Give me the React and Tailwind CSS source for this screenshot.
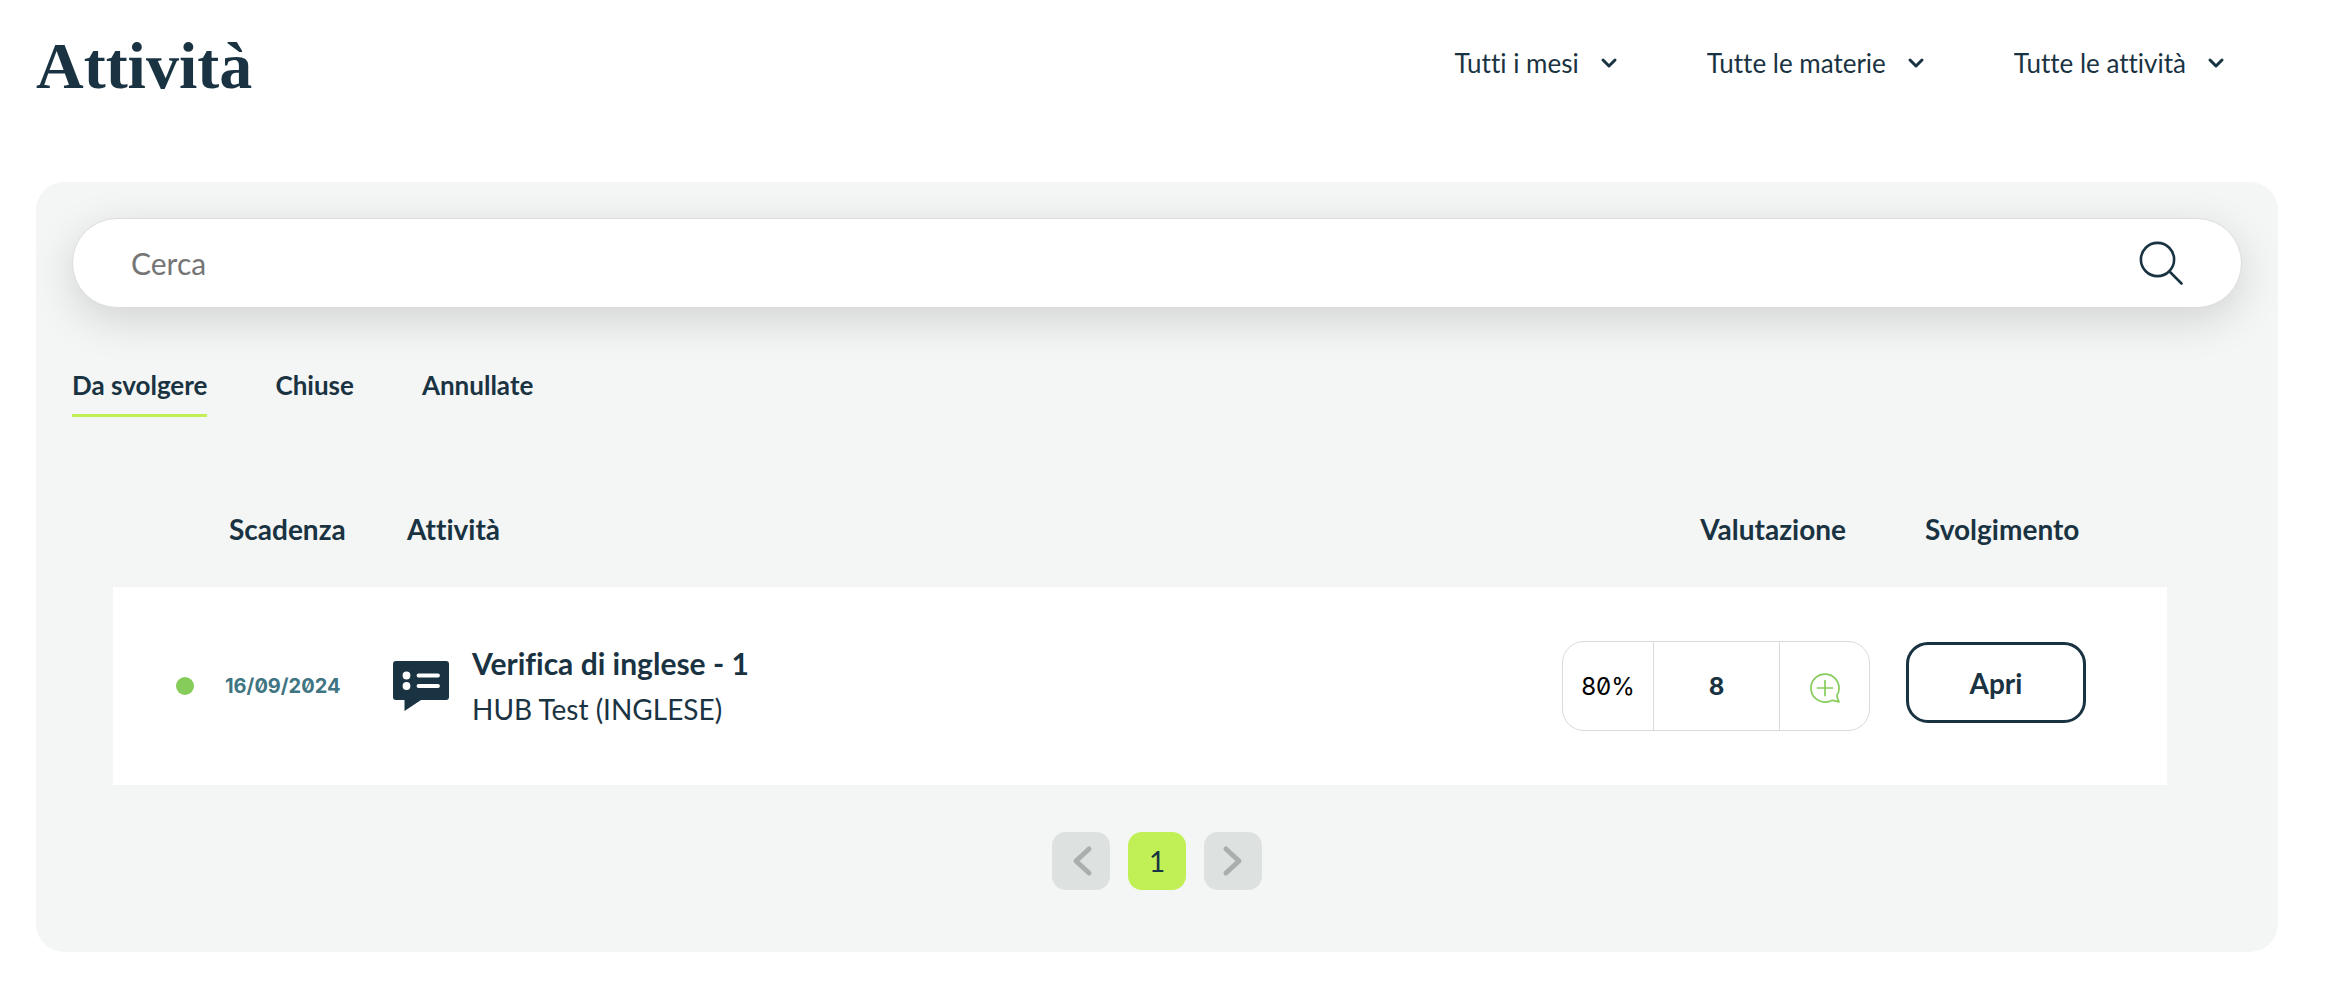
import { useState } from 'react';
import { ChevronDown } from 'lucide-react';

const filters = [
  { id: 'mesi', label: 'Tutti i mesi' },
  { id: 'materie', label: 'Tutte le materie' },
  { id: 'attivita', label: 'Tutte le attività' },
];

const tabs = ['Da svolgere', 'Chiuse', 'Annullate'];

const activities = [
  {
    id: 1,
    date: '16/09/2024',
    title: 'Verifica di inglese - 1',
    subtitle: 'HUB Test (INGLESE)',
    percent: '80%',
    grade: '8',
  },
];

function SearchIcon() {
  return (
    <svg className="w-11 h-11" viewBox="0 0 44 44" fill="none" stroke="currentColor" strokeWidth="2.6" strokeLinecap="round" aria-hidden="true">
      <circle cx="18.5" cy="18.5" r="16.6" />
      <path d="M30.5 30.5 42.5 42.5" />
    </svg>
  );
}

function TestIcon() {
  return (
    <svg className="w-14 h-[50px] shrink-0" viewBox="0 0 56 50" aria-hidden="true">
      <path d="M3 0h50a3 3 0 0 1 3 3v33a3 3 0 0 1-3 3H28L11.5 50V39H3a3 3 0 0 1-3-3V3a3 3 0 0 1 3-3Z" fill="#1a3342" />
      <circle cx="13.5" cy="14.5" r="3.9" fill="#fff" />
      <circle cx="13.5" cy="25" r="3.9" fill="#fff" />
      <path d="M25.5 14.5h19.5M25.5 25h19.5" stroke="#fff" strokeWidth="3.8" strokeLinecap="round" />
    </svg>
  );
}

function CommentIcon() {
  return (
    <svg className="w-[30px] h-[30px]" viewBox="0 0 30 30" fill="none" stroke="#86cc5a" strokeWidth="1.7" strokeLinecap="round" strokeLinejoin="round" aria-hidden="true">
      <path d="M27 22.3A14 14 0 1 0 21.5 27.5C23.5 27.1 26.5 28.3 29 28.9C28.6 26.8 26.6 25 27 22.3Z" />
      <path d="M15 7.5v15M7.5 15h15" />
    </svg>
  );
}

function Arrow({ d }) {
  return (
    <svg className="w-[58px] h-[58px]" viewBox="0 0 58 58" fill="none" stroke="#aaafae" strokeWidth="5" strokeLinecap="round" strokeLinejoin="round" aria-hidden="true">
      <path d={d} />
    </svg>
  );
}

export default function App() {
  const [activeTab, setActiveTab] = useState('Da svolgere');
  const [query, setQuery] = useState('');

  return (
    <main className="min-h-screen bg-white pl-9 pr-14 pb-11 font-[Lato,sans-serif] text-[#1a3342] [font-variant-ligatures:none]">
      {/* Header */}
      <header className="flex h-[182px] items-start justify-between pt-7 pr-[50px]">
        <h1 className="font-['Liberation_Serif',serif] text-[66px] leading-[76px] font-bold">Attività</h1>
        <div className="flex gap-[86px] pt-3">
          {filters.map((filter) => (
            <div key={filter.id} className="flex items-center gap-[18px]">
              <select
                id={filter.id}
                aria-label={filter.label}
                className="appearance-none field-sizing-content bg-transparent text-[26px] leading-[46px] cursor-pointer [font-variant-ligatures:none]"
              >
                <option>{filter.label}</option>
              </select>
              <ChevronDown className="w-6 h-6 pointer-events-none" strokeWidth={3} />
            </div>
          ))}
        </div>
      </header>

      <section className="rounded-[28px] bg-[#f4f6f5] px-9 pt-9 pb-[62px]">
        {/* Search */}
        <form
          onSubmit={(e) => e.preventDefault()}
          className="flex h-[90px] items-center rounded-[45px] border border-[#dcdedd] bg-white pl-[58px] pr-[58px] shadow-[0_12px_44px_rgba(0,0,0,0.14)]"
        >
          <input
            type="text"
            aria-label="Cerca"
            placeholder="Cerca"
            value={query}
            onChange={(e) => setQuery(e.target.value)}
            className="min-w-0 flex-1 bg-transparent text-[30px] outline-none placeholder:text-[#757575]"
          />
          <button type="submit" aria-label="Avvia ricerca">
            <SearchIcon />
          </button>
        </form>

        {/* Tabs */}
        <div className="mt-14 flex gap-[68px]">
          {tabs.map((tab) => (
            <button
              key={tab}
              type="button"
              onClick={() => setActiveTab(tab)}
              className={`border-b-[3px] pb-2 text-[26px] leading-[42px] font-bold ${
                activeTab === tab ? 'border-[#c1f056]' : 'border-transparent'
              }`}
            >
              {tab}
            </button>
          ))}
        </div>

        {/* Activities */}
        <div className="mt-14 pl-[41px] pr-[75px]">
          <table className="w-full table-fixed text-left">
            <thead>
              <tr className="h-[114px] text-[28px] [&>th]:pb-0.5">
                <td className="w-[92px]" />
                <th className="w-[168px] pl-6">Scadenza</th>
                <th className="pl-[34px]">Attività</th>
                <th className="w-[344px] pr-[60px] text-right">Valutazione</th>
                <th className="w-[261px] pl-[19px]">Svolgimento</th>
              </tr>
            </thead>
            <tbody>
              {activities.map((activity) => (
                <tr key={activity.id} className="h-[198px] bg-white">
                  <td className="pl-[63px]">
                    <div className="h-[18px] w-[18px] rounded-full bg-[#86cc5a]" />
                  </td>
                  <td className="pl-5 font-[Inter,sans-serif] text-[20px] font-bold slashed-zero text-[#3f7582]">{activity.date}</td>
                  <td className="pl-5">
                    <div className="flex items-center gap-[23px]">
                      <TestIcon />
                      <div>
                        <p className="text-[30px] leading-[46px] font-bold">{activity.title}</p>
                        <p className="text-[28px] leading-[46px]">{activity.subtitle}</p>
                      </div>
                    </div>
                  </td>
                  <td>
                    <div className="flex h-[90px] w-[308px] rounded-[22px] border border-[#d9dbda] font-[Inter,sans-serif]">
                      <span className="flex w-[90px] items-center justify-center pt-0.5 text-[24px] slashed-zero text-black">{activity.percent}</span>
                      <span className="flex w-[127px] items-center justify-center border-x border-[#d9dbda] pt-0.5 text-[24px] font-bold">{activity.grade}</span>
                      <button type="button" aria-label="Aggiungi commento" className="flex flex-1 items-center justify-center pt-1">
                        <CommentIcon />
                      </button>
                    </div>
                  </td>
                  <td className="pb-2">
                    <button type="button" className="h-[81px] w-[180px] rounded-[22px] border-[3px] border-[#1a3342] pt-0.5 text-[28px] font-bold">
                      Apri
                    </button>
                  </td>
                </tr>
              ))}
            </tbody>
          </table>
        </div>

        {/* Pagination */}
        <nav aria-label="Pagine" className="mt-[47px] flex justify-center gap-[18px]">
          <button type="button" disabled aria-label="Pagina precedente" className="h-[58px] w-[58px] rounded-[14px] bg-[#dde1e0]">
            <Arrow d="M37 17 24 29l13 12" />
          </button>
          <button type="button" aria-current="page" className="h-[58px] w-[58px] rounded-[14px] bg-[#c1f056] text-[28px]">
            1
          </button>
          <button type="button" disabled aria-label="Pagina successiva" className="h-[58px] w-[58px] rounded-[14px] bg-[#dde1e0]">
            <Arrow d="M22 17 35 29 22 41" />
          </button>
        </nav>
      </section>
    </main>
  );
}
